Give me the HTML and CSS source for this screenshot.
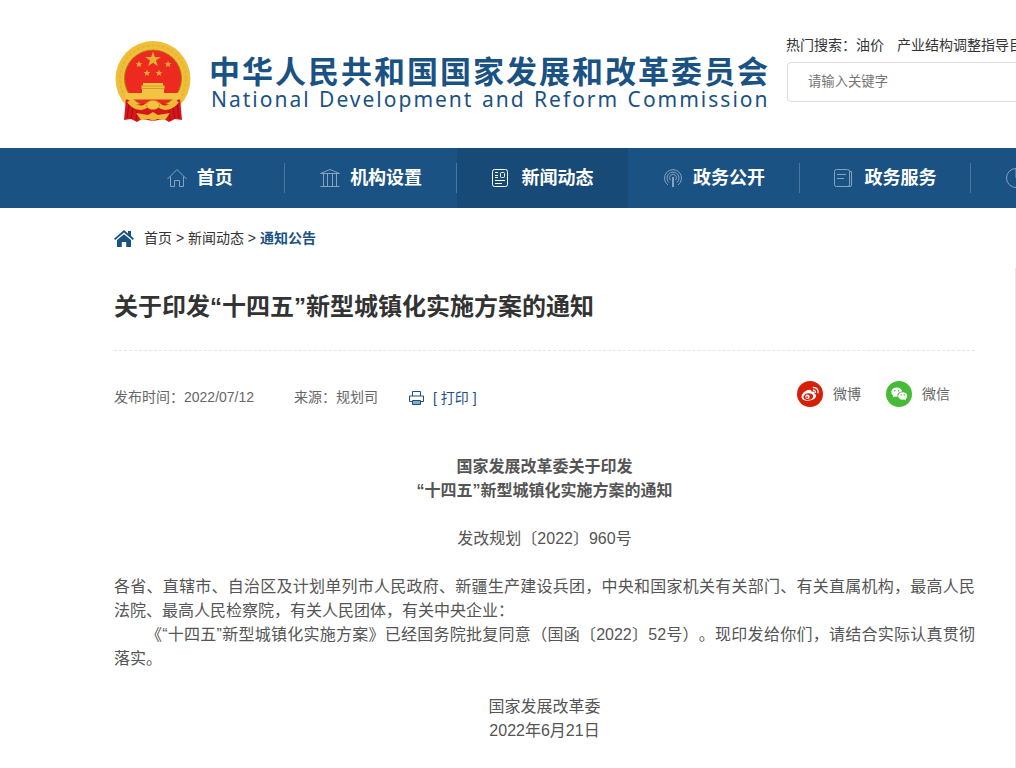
FILE: index.html
```html
<!DOCTYPE html>
<html lang="zh-CN">
<head>
  <meta charset="UTF-8">
  <title>关于印发“十四五”新型城镇化实施方案的通知</title>
  <link rel="stylesheet" href="styles.css">
</head>
<body>
  <header class="header container">
    <div class="logo">
      <svg class="emblem" width="76" height="84" viewBox="0 0 76 84">
        <ellipse cx="38" cy="39" rx="37.500" ry="38" fill="#efbf3a"/>
        <ellipse cx="38" cy="39" rx="33" ry="33.500" fill="none" stroke="#e8b432" stroke-width="2" stroke-dasharray="3 2"/>
        <ellipse cx="38" cy="38.500" rx="28.500" ry="28.500" fill="#ec2a20" stroke="#b67918"/>
        <path fill="#e8b033" d="M38 11.500l1.900 5.500h5.800l-4.700 3.500 1.800 5.700-4.800-3.500-4.800 3.500 1.800-5.700-4.700-3.500h5.800zM24 20.800l.9 2.400h2.600l-2.100 1.600.8 2.500-2.200-1.500-2.200 1.500.8-2.500-2.100-1.600h2.600zM53 20.800l.9 2.400h2.600l-2.100 1.600.8 2.500-2.200-1.500-2.200 1.500.8-2.500-2.100-1.600h2.600zM32 29.500l.9 2.400h2.600l-2.100 1.600.8 2.500-2.200-1.500-2.200 1.500.8-2.500-2.100-1.600h2.600zM44 29.500l.9 2.400h2.600l-2.100 1.600.8 2.500-2.200-1.500-2.200 1.500.8-2.500-2.100-1.600h2.600z"/>
        <path fill="#d5161a" d="M11 58l9 7 18-3 18 3 9-7 2 22-7-1-6 3-5-3-11 2-11-2-5 3-6-3-7 1z"/>
        <path fill="#f3c444" d="M28 43h20v2.500h1.500v3.500H49v4h17v6.500H10V53h17v-4h-.5v-3.500H28z"/>
        <path stroke="#cf8421" d="M26.500 48.500h23M27 46h22" stroke-width=".7"/>
        <path stroke="#a30b13" fill="none" d="M14 64l-2 14M18 67l-2 12M22 71l-1 9M62 64l2 14M58 67l2 12M54 71l1 9"/>
        <path fill="none" stroke="#edb934" stroke-width="4.500" d="M14 61c5 7 13 8 17 5 4-4 10-4 14 0 4 3 12 2 17-5"/>
        <ellipse cx="38" cy="65" rx="6.500" ry="4.500" fill="#f4c340" stroke="#cd8a1c" stroke-dasharray="2 1"/>
        <path fill="#edb733" d="M21 73l12 2 5-3 5 3 12-2-5 7-8-1-4 2-4-2-8 1z"/>
      </svg>
      <div class="logo-text">
        <div class="logo-cn">中华人民共和国国家发展和改革委员会</div>
        <div class="logo-en">National Development and Reform Commission</div>
      </div>
    </div>
    <div class="search">
      <div class="hot">热门搜索：<a>油价</a><a>产业结构调整指导目录</a></div>
      <input class="search-input" type="text" placeholder="请输入关键字">
    </div>
  </header>

  <nav class="nav">
    <ul class="nav-list container">
      <li class="nav-item">
        <svg class="nav-icon" width="20" height="20" viewBox="0 0 20 20"><path d="M.5 11L10 1.500 19.500 11M3.500 8.500v10h4v-6h5v6h4v-10"/></svg>
        <span>首页</span>
      </li>
      <li class="nav-item">
        <svg class="nav-icon" width="20" height="20" viewBox="0 0 20 20"><path d="M.5 5.500L10 1.500l9.500 4zM.5 18.500h19M3.500 6v12M7.500 6v12M12.500 6v12M16.500 6v12"/></svg>
        <span>机构设置</span>
      </li>
      <li class="nav-item active">
        <svg class="nav-icon" width="20" height="20" viewBox="0 0 20 20"><rect x=".5" y="1.500" width="15" height="17" rx="2"/><rect x="8.500" y="4.500" width="4" height="5" rx="1"/><path d="M3 4.500h3M3 7.500h3M3 9.500h3M3 12.500h10M3 15.500h7"/></svg>
        <span>新闻动态</span>
      </li>
      <li class="nav-item">
        <svg class="nav-icon" width="20" height="20" viewBox="0 0 20 20"><path d="M5 17A8.500 8.500 0 1 1 15 17M6 14.500A6 6 0 1 1 14 14.500M7.500 12.200A3.500 3.500 0 1 1 12.500 12.200"/><path d="M10 9v10" stroke-width="2"/></svg>
        <span>政务公开</span>
      </li>
      <li class="nav-item">
        <svg class="nav-icon" width="20" height="20" viewBox="0 0 20 20"><rect x=".5" y="1.500" width="15" height="17" rx="2"/><path d="M3 6.500h9M3 10.500h7M15.500 3.500h2v13.500q0 1.500-1.500 1.500h-3"/></svg>
        <span>政务服务</span>
      </li>
      <li class="nav-item">
        <svg class="nav-icon" width="20" height="20" viewBox="0 0 20 20"><path d="M10 .5A9.500 9.500 0 1 0 19.500 10H10z"/></svg>
        <span>发改数据</span>
      </li>
      <li class="nav-item"></li>
    </ul>
  </nav>

  <div class="crumb container">
    <svg class="crumb-icon" width="20" height="17" viewBox="0 0 20 17"><path d="M10 0l4 3.400V1h3v5l3 2.700-1.200 1.200L10 2.600 1.200 9.900 0 8.700z"/><path d="M10 4.200l7 5.800v7h-4.800v-5H7.800v5H3v-7z"/></svg>
    <div><a>首页</a> &gt; <a>新闻动态</a> &gt; <a class="current">通知公告</a></div>
  </div>

  <div class="main container">
    <article class="article">
      <h1 class="title">关于印发“十四五”新型城镇化实施方案的通知</h1>
      <div class="meta">
        <span class="meta-time">发布时间：2022/07/12</span>
        <span class="meta-source">来源：规划司</span>
        <span class="print">
          <svg width="15" height="14" viewBox="0 0 15 14"><path d="M3.500 5V.5h8V5M3 10.500H.5v-5.500h14v5.500H12"/><path class="paper" d="M3.500 9.500h8v4h-8z"/></svg>
          [ 打印 ]
        </span>
        <div class="share">
          <span class="share-item">
            <svg width="26" height="26" viewBox="0 0 26 26">
              <circle cx="13" cy="13" r="13" fill="#d81e06"/>
              <path fill="#fff" d="M11.500 9c1.700-.8 3.400-.3 2.900 1.800 2.200-.7 3.800-.1 3.100 1.900 2 .8 2.200 2.700.7 4.300-3.400 4-13.700 3.700-13.700-1.200 0-3.200 4.700-7.400 7-6.800z"/>
              <ellipse cx="11.300" cy="15.600" rx="4.900" ry="3.300" transform="rotate(-8 11.300 15.600)" fill="#d81e06"/>
              <circle cx="10.500" cy="15.800" r="2.200" fill="#fff"/>
              <circle cx="10" cy="16.200" r=".9" fill="#d81e06"/>
              <path fill="none" stroke="#fff" stroke-width="1.300" d="M15.800 6.600c3.800-.6 6.200 2.400 5.100 5.800M16 9.200c1.800-.2 2.800 1 2.400 2.600"/>
            </svg>
            微博
          </span>
          <span class="share-item">
            <svg width="26" height="26" viewBox="0 0 26 26">
              <circle cx="13" cy="13" r="13" fill="#46bb36"/>
              <path fill="#fff" d="M10.700 6.500c3 0 5.200 1.800 5.600 4.100-3.400 0-5.500 2.500-4.700 5.200-1 .1-1.900 0-2.700-.3l-2 1.100.5-1.900C3.300 11.800 5.600 6.500 10.700 6.500z"/>
              <path fill="#fff" d="M16.700 11.200c2.600 0 4.500 1.700 4.500 3.800 0 1.200-.7 2.200-1.700 2.900l.4 1.500-1.700-.9c-3 .7-6-.9-6-3.500 0-2.100 2-3.800 4.500-3.800z"/>
              <g fill="#46bb36"><circle cx="8.800" cy="9.800" r=".8"/><circle cx="12.600" cy="9.800" r=".8"/><circle cx="15.200" cy="13.900" r=".7"/><circle cx="18.200" cy="13.900" r=".7"/></g>
            </svg>
            微信
          </span>
        </div>
      </div>
      <div class="content">
        <p class="center"><strong>国家发展改革委关于印发<br>“十四五”新型城镇化实施方案的通知</strong></p>
        <p class="center">发改规划〔2022〕960号</p>
        <p class="text">各省、直辖市、自治区及计划单列市人民政府、新疆生产建设兵团，中央和国家机关有关部门、有关直属机构，最高人民法院、最高人民检察院，有关人民团体，有关中央企业：</p>
        <p class="text indent">《“十四五”新型城镇化实施方案》已经国务院批复同意（国函〔2022〕52号）。现印发给你们，请结合实际认真贯彻落实。</p>
        <p class="center sign">国家发展改革委<br>2022年6月21日</p>
      </div>
    </article>
  </div>
</body>
</html>
```

FILE: styles.css
```css
* {
  margin: 0;
  padding: 0;
  box-sizing: border-box;
}
body {
  height: 768px;
  overflow: hidden;
  background: #fff;
  color: #333;
  font: 14px/24px "Liberation Sans", "Noto Sans CJK SC", sans-serif;
  text-spacing-trim: space-all;
}
ul {
  list-style: none;
}
.container {
  width: 1200px;
  margin-left: 114px;
}

/* header */
.header {
  display: flex;
  height: 148px;
}
.logo {
  display: flex;
  width: 672px;
  padding: 40px 0 0 1px;
}
.emblem {
  margin-right: 18px;
}
.logo-text {
  padding-top: 10px;
  color: #1b5284;
  white-space: nowrap;
}
.logo-cn {
  font-size: 31px;
  line-height: 46px;
  font-weight: bold;
  letter-spacing: 2px;
}
.logo-en {
  margin-top: -9px;
  padding-left: 2px;
  font-family: "Noto Sans", sans-serif;
  font-size: 21px;
  line-height: 24px;
  letter-spacing: 2px;
  word-spacing: 1px;
}
.search {
  padding-top: 33px;
  white-space: nowrap;
}
.hot a {
  margin-right: 13px;
}
.search-input {
  display: block;
  width: 380px;
  height: 40px;
  margin: 5px 0 0 1px;
  padding: 0 0 2px 20px;
  border: 1px solid #ddd;
  border-radius: 4px;
  font: 13.333px "Liberation Sans", "Noto Sans CJK SC", sans-serif;
}
.search-input::placeholder {
  color: #757575;
}

/* nav */
.nav {
  height: 60px;
  background: #1b5284;
}
.nav-list {
  display: flex;
}
.nav-item {
  display: flex;
  flex: 1;
  align-items: center;
  justify-content: center;
  gap: 10px;
  height: 60px;
  color: #fff;
  font-size: 18px;
  font-weight: bold;
  background: linear-gradient(#4a77a0, #4a77a0) no-repeat right center / 1px 30px;
}
.nav-item.active {
  background: #174a77;
}
.nav-icon {
  fill: none;
  stroke: #86a3bf;
}
.active .nav-icon {
  stroke: #fff;
}

/* breadcrumb */
.crumb {
  display: flex;
  align-items: center;
  gap: 10px;
  height: 60px;
}
.crumb-icon {
  fill: #1b5284;
}
.current {
  color: #1b5284;
  font-weight: bold;
}

/* article */
.main {
  display: flex;
}
.article {
  width: 902px;
  height: 500px;
  padding-right: 40px;
  border-right: 1px solid #e6e6e6;
}
.title {
  height: 83px;
  padding-top: 21px;
  border-bottom: 1px dashed #e6e6e6;
  font-size: 24px;
  line-height: 36px;
}
.meta {
  display: flex;
  align-items: center;
  height: 92px;
  color: #666;
}
.meta-time {
  width: 180px;
}
.meta-source {
  width: 115px;
}
.print {
  display: flex;
  align-items: center;
  gap: 9px;
  padding-top: 2px;
  color: #1b5284;
}
.print svg {
  fill: none;
  stroke: #1b5284;
}
.print .paper {
  fill: #8da9c1;
}
.share {
  display: flex;
  gap: 25px;
  margin: 0 25px 6px auto;
}
.share-item {
  display: flex;
  align-items: center;
  gap: 10px;
}
.content {
  padding-top: 12px;
  color: #555;
  font-size: 16px;
  line-height: 24px;
}
.content p {
  margin-bottom: 24px;
}
.content .center {
  text-align: center;
}
.content .text {
  margin-bottom: 0;
  text-align: justify;
}
.indent {
  text-indent: 2em;
}
.content .sign {
  margin-top: 24px;
}
```
